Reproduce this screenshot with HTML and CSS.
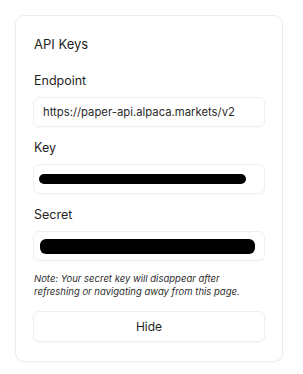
FILE: index.html
```html
<!DOCTYPE html>
<html lang="en">
<head>
    <meta charset="UTF-8">
    <meta name="viewport" content="width=device-width, initial-scale=1.0">
    <title>API Keys</title>
    <link rel="stylesheet" href="styles.css">
</head>
<body>
    <div class="card">
        <h2 class="card-title">API Keys</h2>

        <div class="field">
            <label>Endpoint</label>
            <div class="field-box">https://paper-api.alpaca.markets/v2</div>
        </div>

        <div class="field">
            <label>Key</label>
            <div class="field-box">
                <span class="redacted redacted-key"></span>
            </div>
        </div>

        <div class="field">
            <label>Secret</label>
            <div class="field-box">
                <span class="redacted redacted-secret"></span>
            </div>
        </div>

        <p class="note">Note: Your secret key will disappear after refreshing or navigating away from this page.</p>

        <button type="button">Hide</button>
    </div>
</body>
</html>
```

FILE: styles.css
```css
body {
    margin: 0;
    padding: 15px 20px 14px 15px;
    font-family: Inter, 'Noto Sans', sans-serif;
    color: #1f1f1f;
    background: #fff;
}

.card {
    width: 232px;
    padding: 18px 17px 19px 17px;
    border: 1px solid #ececec;
    border-radius: 9px;
    box-shadow: 0 1px 2px rgba(0, 0, 0, 0.03);
}

.card-title {
    margin: 0 0 17px 1px;
    font-size: 13px;
    font-weight: 400;
    line-height: 20px;
}

.field {
    margin-bottom: 11px;
}

.field label {
    display: block;
    margin-left: 1px;
    font-size: 12.5px;
    line-height: 20px;
    margin-bottom: 6px;
}

.field-box {
    display: flex;
    align-items: center;
    height: 28px;
    padding: 0 9px;
    border: 1px solid #efefef;
    border-radius: 6px;
    font-size: 11.3px;
    color: #2a2a2a;
    box-shadow: 0 1px 2px rgba(0, 0, 0, 0.02);
}

.redacted {
    display: block;
    background: #000;
    border-radius: 6px;
}

.redacted-key {
    width: 207px;
    height: 10px;
    margin-left: -4px;
}

.redacted-secret {
    width: 218px;
    height: 15px;
    margin-left: -3px;
}

.note {
    margin: 2px 0 13px 1px;
    font-size: 9.5px;
    font-style: italic;
    line-height: 13px;
    color: #2e2e2e;
}

button {
    width: 100%;
    height: 31px;
    background: #fff;
    border: 1px solid #efefef;
    border-radius: 6px;
    font-family: Inter, 'Noto Sans', sans-serif;
    font-size: 12px;
    color: #1f1f1f;
    box-shadow: 0 1px 2px rgba(0, 0, 0, 0.03);
}
```
